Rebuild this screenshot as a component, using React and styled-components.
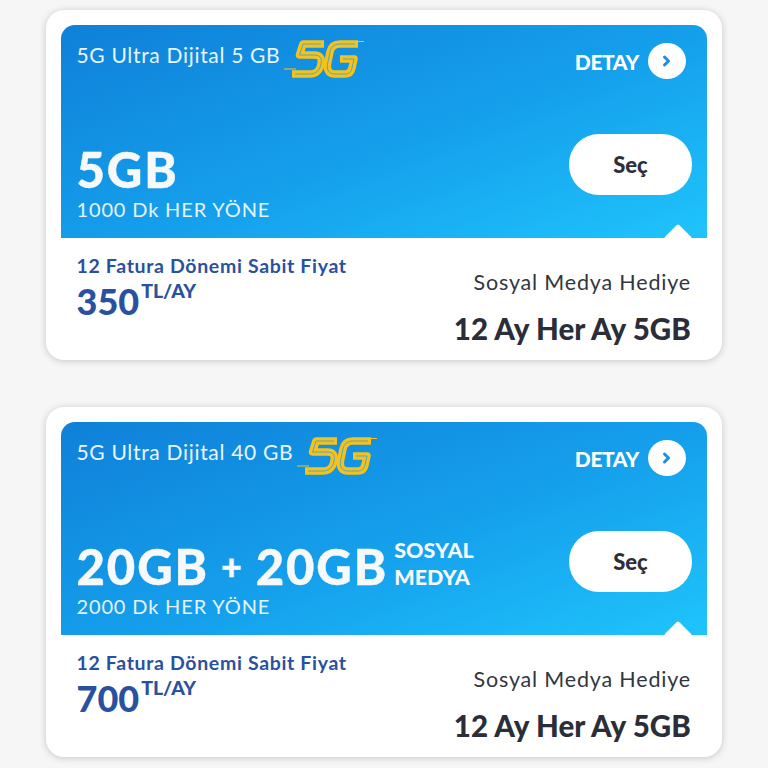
import React from 'react';
import styled, { createGlobalStyle } from 'styled-components';

const GlobalStyle = createGlobalStyle`
  html, body {
    margin: 0;
    padding: 0;
    background: #f6f6f6;
    font-family: "Lato", "Noto Sans", sans-serif;
  }
`;

const Page = styled.div`
  width: 768px;
  height: 768px;
  overflow: hidden;
  box-sizing: border-box;
  padding: 10px 46px 0;
  display: flex;
  flex-direction: column;
  gap: 47px;
`;

const Card = styled.section`
  height: 350px;
  flex-shrink: 0;
  box-sizing: border-box;
  padding: 15px 15px 0;
  background: #fff;
  border-radius: 18px;
  box-shadow: 0 1px 7px rgba(40, 50, 70, 0.24);
`;

const Hero = styled.div`
  position: relative;
  overflow: hidden;
  height: 213px;
  box-sizing: border-box;
  padding: 15px 15px 16px 15.500px;
  display: flex;
  flex-direction: column;
  justify-content: space-between;
  border-radius: 14px 14px 0 0;
  background: linear-gradient(160deg, #0f80d8 0%, #15a0ec 55%, #1fc4fc 100%);
  color: #fff;
`;

const Notch = styled.span`
  position: absolute;
  right: 19px;
  bottom: -10px;
  width: 20px;
  height: 20px;
  background: #fff;
  border-radius: 2px;
  transform: rotate(45deg);
`;

const TopRow = styled.div`
  display: flex;
  justify-content: space-between;
  align-items: flex-start;
`;

const Title = styled.div`
  display: flex;
  align-items: flex-start;
  gap: 8px;
  font-size: 21px;
  line-height: 30px;
  letter-spacing: 0.68px;
  color: #eaf6ff;
`;

const Logo = styled.svg`
  width: 72px;
  height: 38px;
  flex-shrink: 0;
  overflow: visible;
`;

const Detail = styled.div`
  display: flex;
  align-items: center;
  gap: 9px;
  margin-top: 3px;
  font-size: 21px;
  font-weight: 900;
  letter-spacing: -0.4px;
`;

const DetailIcon = styled.span`
  width: 38px;
  height: 36px;
  margin-right: 6px;
  border-radius: 50%;
  background: #fff;
  display: flex;
  align-items: center;
  justify-content: center;
`;

const BottomRow = styled.div`
  display: flex;
  justify-content: space-between;
  align-items: flex-end;
`;

const Allowance = styled.div`
  display: flex;
  align-items: center;
  gap: 11px;
  height: 46px;
  margin-top: -3px;
  font-size: 49px;
  font-weight: 900;
  letter-spacing: 1.9px;
  -webkit-text-stroke: 0.4px #f6f8fa;
  color: #f6f8fa;
`;

const Plus = styled.span`
  margin: 0 1px;
  font-size: 36px;
`;

const AllowanceNote = styled.span`
  margin: -4px 0 0 -5px;
  font-size: 21.500px;
  line-height: 27px;
  font-weight: 900;
  letter-spacing: 0;
  -webkit-text-stroke: 0;
`;

const Minutes = styled.div`
  margin-top: 4px;
  font-size: 20px;
  line-height: 26px;
  letter-spacing: 0.85px;
  color: #e4f4ff;
`;

const SelectButton = styled.button`
  width: 123px;
  height: 61px;
  margin-bottom: 27px;
  border: none;
  border-radius: 30px;
  background: #fff;
  color: #2c2f3a;
  font: 900 22px "Lato", sans-serif;
`;

const Footer = styled.div`
  display: flex;
  justify-content: space-between;
  padding: 16px 16px 0 15.500px;
`;

const PriceBlock = styled.div`
  color: #2a51a0;
`;

const PriceLabel = styled.div`
  font-size: 19.500px;
  line-height: 24px;
  font-weight: 700;
  letter-spacing: 0.66px;
`;

const Price = styled.div`
  display: flex;
  align-items: flex-start;
  margin-top: 2px;
  font-size: 36px;
  line-height: 42px;
  font-weight: 900;
`;

const PriceUnit = styled.span`
  margin: -1px 0 0 2px;
  font-size: 19.500px;
  line-height: 24px;
  font-weight: 900;
`;

const GiftBlock = styled.div`
  text-align: right;
  color: #33363f;
`;

const GiftLabel = styled.div`
  margin-top: 14px;
  font-size: 21.500px;
  line-height: 28px;
  letter-spacing: 0.82px;
`;

const GiftValue = styled.div`
  margin-top: 15px;
  font-size: 29.500px;
  line-height: 36px;
  font-weight: 900;
  letter-spacing: 0.1px;
  color: #2b2e38;
`;

const FiveGLogo = () => (
  <Logo viewBox="0 0 72 38" fill="none">
    <g strokeLinejoin="round">
      <path d="M36 4H15L11.500 15H26C33 15 34 19 33 24C32 30 28 34 22 34H4" stroke="#f4c21f" strokeWidth="7.500" />
      <path d="M70 4H52C46 4 43 7 42 12L39.500 24C38.500 30 41 34 47 34H57C61 34 63 32 64 28L66 19H52" stroke="#f4c21f" strokeWidth="7.500" />
      <path d="M33 4H15L11.500 15H26C33 15 34 19 33 24C32 30 28 34 22 34H7" stroke="#3f9ecf" strokeWidth="0.800" />
      <path d="M67 4H52C46 4 43 7 42 12L39.500 24C38.500 30 41 34 47 34H57C61 34 63 32 64 28L66 19H55" stroke="#3f9ecf" strokeWidth="0.800" />
      <path d="M64 1.500H76" stroke="#f4c21f" strokeWidth="1" />
      <path d="M-4 29H8" stroke="#f4c21f" strokeWidth="1" />
    </g>
  </Logo>
);

const Chevron = () => (
  <svg width="12" height="14" viewBox="0 0 12 14" fill="none">
    <path d="M3.500 3L7.500 7L3.500 11" stroke="#1a8ee0" strokeWidth="3" strokeLinecap="round" strokeLinejoin="round" />
  </svg>
);

const plans = [
  {
    title: '5G Ultra Dijital 5 GB',
    allowance: ['5GB'],
    minutes: '1000 Dk HER YÖNE',
    price: '350',
  },
  {
    title: '5G Ultra Dijital 40 GB',
    allowance: ['20GB', '20GB'],
    minutes: '2000 Dk HER YÖNE',
    price: '700',
  },
];

const PlanCard = ({ plan }) => (
  <Card>
    <Hero>
      <TopRow>
        <Title>
          {plan.title}
          <FiveGLogo />
        </Title>
        <Detail>
          DETAY
          <DetailIcon><Chevron /></DetailIcon>
        </Detail>
      </TopRow>
      <BottomRow>
        <div>
          <Allowance>
            {plan.allowance[0]}
            {plan.allowance[1] && (
              <>
                <Plus>+</Plus>
                {plan.allowance[1]}
                <AllowanceNote>SOSYAL<br />MEDYA</AllowanceNote>
              </>
            )}
          </Allowance>
          <Minutes>{plan.minutes}</Minutes>
        </div>
        <SelectButton>Seç</SelectButton>
      </BottomRow>
      <Notch />
    </Hero>
    <Footer>
      <PriceBlock>
        <PriceLabel>12 Fatura Dönemi Sabit Fiyat</PriceLabel>
        <Price>
          {plan.price}
          <PriceUnit>TL/AY</PriceUnit>
        </Price>
      </PriceBlock>
      <GiftBlock>
        <GiftLabel>Sosyal Medya Hediye</GiftLabel>
        <GiftValue>12 Ay Her Ay 5GB</GiftValue>
      </GiftBlock>
    </Footer>
  </Card>
);

const App = () => (
  <>
    <GlobalStyle />
    <Page>
      {plans.map((plan) => (
        <PlanCard key={plan.title} plan={plan} />
      ))}
    </Page>
  </>
);

export default App;
